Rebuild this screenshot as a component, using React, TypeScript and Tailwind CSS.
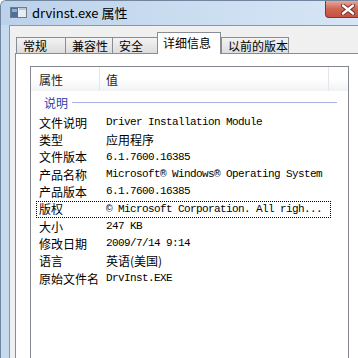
import React from 'react';

const cjk = { fontFamily: '"Noto Sans CJK SC", "Noto Sans", sans-serif' };

type Row = { k: string; v: string; zh?: boolean; focus?: boolean };

const rows: Row[] = [
  { k: '文件说明', v: 'Driver Installation Module' },
  { k: '类型', v: '应用程序', zh: true },
  { k: '文件版本', v: '6.1.7600.16385' },
  { k: '产品名称', v: 'Microsoft® Windows® Operating System' },
  { k: '产品版本', v: '6.1.7600.16385' },
  { k: '版权', v: '© Microsoft Corporation. All righ...', focus: true },
  { k: '大小', v: '247 KB' },
  { k: '修改日期', v: '2009/7/14 9:14' },
  { k: '语言', v: '英语(美国)', zh: true },
  { k: '原始文件名', v: 'DrvInst.EXE' },
];

const tabs = [
  { label: '常规', w: 'w-[50px]' },
  { label: '兼容性', w: 'w-[48px]' },
  { label: '安全', w: 'w-[46px]' },
  { label: '详细信息', w: 'w-[64px]', active: true },
  { label: '以前的版本', w: 'w-[68px]' },
];

function AppIcon() {
  return (
    <svg width="17" height="11" viewBox="0 0 17 11">
      <rect x="0.5" y="0.5" width="16" height="10" fill="#e8edf3" stroke="#6f7c8c" />
      <rect x="1" y="1" width="7" height="9" fill="#4f6f96" />
      <rect x="2" y="2" width="5" height="3" fill="#8fb0d6" />
      <rect x="9" y="1" width="7" height="2" fill="#b9c6d6" />
    </svg>
  );
}

function CloseGlyph() {
  return (
    <svg width="14" height="11" viewBox="0 0 14 11">
      <path d="M2 1.5 L12 9.5 M12 1.5 L2 9.5" stroke="#6b2a22" strokeWidth="4.2" strokeLinecap="round" />
      <path d="M2 1.5 L12 9.5 M12 1.5 L2 9.5" stroke="#ffffff" strokeWidth="2.4" strokeLinecap="round" />
    </svg>
  );
}

export default function App() {
  return (
    <div className="w-[358px] h-[358px] overflow-hidden flex flex-col bg-[#c6daf0] border-l border-t border-[#71859f] rounded-tl-[6px]">
      {/* title bar */}
      <div className="h-[24px] shrink-0 flex items-start bg-gradient-to-r from-[#bcd2ea] to-[#d7e6f6]">
        <div className="flex items-center h-[22px] pl-[9px] gap-[5px]">
          <AppIcon />
          <span className="text-[13px] text-black leading-none" style={cjk}>
            drvinst.exe 属性
          </span>
        </div>
        <div className="ml-auto shrink-0 w-[33px] h-[17px] rounded-bl-[4px] border-l border-b border-[#7a3a33] bg-gradient-to-b from-[#e7a79a] via-[#cf6453] to-[#c8503f] flex items-center pl-[15px]">
          <CloseGlyph />
        </div>
      </div>

      {/* client area */}
      <div className="flex-1 flex ml-[8px] border-l border-t border-[#8797ad] bg-[#f0f0f0]">
        <div className="flex-1 flex flex-col pl-[5px] pt-[6px]">
          {/* tabs */}
          <div className="h-[21px] flex items-end pl-px relative z-10" style={cjk}>
            {tabs.map((t) =>
              t.active ? (
                <div
                  key={t.label}
                  className={`${t.w} h-[22px] -mb-px bg-white border-l border-r border-t border-[#898c95] pl-[5px] pt-[3px] text-[12px] leading-[14px] text-black`}
                >
                  {t.label}
                </div>
              ) : (
                <div
                  key={t.label}
                  className={`${t.w} h-[16px] bg-gradient-to-b from-[#f3f3f3] to-[#dddddd] border-l border-r border-t border-[#898c95] pl-[6px] pt-px text-[12px] leading-[14px] text-black -mr-px`}
                >
                  {t.label}
                </div>
              )
            )}
          </div>

          {/* tab page */}
          <div className="flex-1 bg-white border-l border-t border-[#898c95] pl-[14px] pt-[12px]">
            <div className="w-[319px] h-[320px] border border-[#828790] bg-white">
              {/* header */}
              <div
                className="h-[24px] flex text-[12px] text-[#1e1e1e] bg-gradient-to-b from-white via-white to-[#f1f2f4]"
                style={cjk}
              >
                <div className="w-[69px] pl-[8px] flex items-center pt-[2px] border-r border-[#e3e5e9]">属性</div>
                <div className="w-[229px] pl-[6px] flex items-center pt-[2px] border-r border-[#e3e5e9]">值</div>
                <div className="flex-1" />
              </div>

              {/* group */}
              <div className="h-[23px] flex items-center pl-[13px] pr-[11px] gap-[4px]">
                <span className="text-[12px] text-[#2b3fa8] leading-none" style={cjk}>
                  说明
                </span>
                <div className="flex-1 h-px bg-[#aab0e2]" />
              </div>

              {/* rows */}
              {rows.map((r) => (
                <div
                  key={r.k}
                  className={`h-[17.33px] ml-[5px] w-[295px] flex items-center border border-dotted ${
                    r.focus ? 'border-black' : 'border-transparent'
                  }`}
                >
                  <div className="w-[69px] pl-[2px] text-[12px] leading-none text-black" style={cjk}>
                    {r.k}
                  </div>
                  {r.zh ? (
                    <div className="text-[12px] leading-none text-black whitespace-nowrap" style={cjk}>
                      {r.v}
                    </div>
                  ) : (
                    <div
                      className="text-[11px] tracking-[-0.6px] leading-none text-black whitespace-nowrap"
                      style={{ fontFamily: '"Liberation Mono", monospace' }}
                    >
                      {r.v}
                    </div>
                  )}
                </div>
              ))}
            </div>
          </div>
        </div>
      </div>
    </div>
  );
}
